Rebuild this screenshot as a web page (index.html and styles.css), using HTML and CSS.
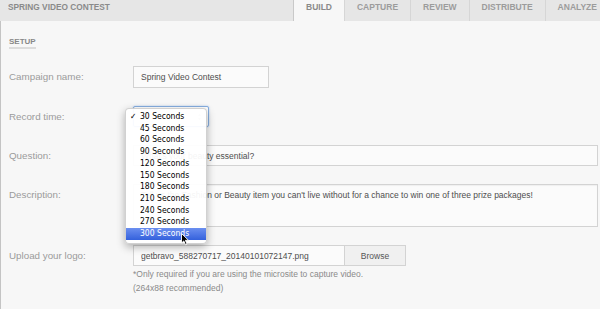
FILE: index.html
```html
<!DOCTYPE html>
<html lang="en">
<head>
  <meta charset="UTF-8">
  <title>Spring Video Contest - Build</title>
  <link rel="stylesheet" href="styles.css">
</head>
<body>
  <div class="topbar">
    <div class="title">SPRING VIDEO CONTEST</div>
    <ul class="tabs">
      <li class="active">BUILD</li>
      <li>CAPTURE</li>
      <li>REVIEW</li>
      <li>DISTRIBUTE</li>
      <li>ANALYZE</li>
    </ul>
  </div>

  <div class="page">
    <h2 class="section-title">SETUP</h2>

    <div class="row">
      <label>Campaign name:</label>
      <input class="text short" type="text" value="Spring Video Contest">
    </div>

    <div class="row">
      <label>Record time:</label>
      <div class="select">
        30 Seconds
        <svg class="updown" width="5" height="8" viewBox="0 0 5 8"><path d="M0.5 3 L2.5 0.5 L4.5 3 Z M0.5 5 L2.5 7.5 L4.5 5 Z" fill="#cfcfcf"/></svg>
        <ul class="menu">
          <li><span class="check">✓</span>30 Seconds</li>
          <li>45 Seconds</li>
          <li>60 Seconds</li>
          <li>90 Seconds</li>
          <li>120 Seconds</li>
          <li>150 Seconds</li>
          <li>180 Seconds</li>
          <li>210 Seconds</li>
          <li>240 Seconds</li>
          <li>270 Seconds</li>
          <li class="hover">300 Seconds</li>
        </ul>
        <svg class="cursor" width="9" height="13" viewBox="0 0 9 13"><path d="M0.5 0.5 L0.5 10 L2.8 7.9 L4.5 11.8 L6 11.1 L4.4 7.3 L7.5 7.3 Z" fill="#000" stroke="#fff" stroke-width="0.9"/></svg>
      </div>
    </div>

    <div class="row">
      <label>Question:</label>
      <input class="text wide" type="text" value="What's your beauty essential?">
    </div>

    <div class="row">
      <label>Description:</label>
      <textarea class="text wide area">Tell us the Fashion or Beauty item you can't live without for a chance to win one of three prize packages!</textarea>
    </div>

    <div class="row">
      <label>Upload your logo:</label>
      <div>
        <div class="file">
          <input class="text filename" type="text" value="getbravo_588270717_20140101072147.png">
          <button class="browse">Browse</button>
        </div>
        <p class="note">*Only required if you are using the microsite to capture video.<br>(264x88 recommended)</p>
      </div>
    </div>
  </div>
</body>
</html>
```

FILE: styles.css
```css
body {
  margin: 0;
  background-color: #f7f7f7;
  font-family: "Liberation Sans", Arial, sans-serif;
  overflow: hidden;
}
.topbar {
  display: flex;
  height: 21px;
  overflow: hidden;
}
.topbar .title {
  flex: 0 0 293px;
  box-sizing: border-box;
  padding-left: 8px;
  background-color: #e6e6e6;
  color: #8a8a8a;
  font-size: 8.3px;
  font-weight: bold;
  line-height: 14px;
}
.tabs {
  display: flex;
  flex-shrink: 0;
  margin: 0;
  padding: 0;
  list-style: none;
}
.tabs li {
  padding: 0 12px;
  background-color: #e6e6e6;
  border-left: 1px solid #d6d6d6;
  color: #9c9c9c;
  font-size: 8.5px;
  font-weight: bold;
  line-height: 14px;
}
.tabs li.active {
  background-color: #f7f7f7;
  border-left-color: #c9c9c9;
  color: #8a8a8a;
}
.page {
  height: 288px;
  box-sizing: border-box;
  padding: 16px 0 0 8px;
  border-left: 1px solid #c4c4c4;
}
.section-title {
  width: fit-content;
  margin: 0 0 17px;
  border-bottom: 2px solid #dcdcdc;
  color: #888;
  font-size: 8px;
  font-weight: bold;
  line-height: 10px;
}
.row {
  display: flex;
  align-items: flex-start;
  margin-bottom: 18px;
}
.row label {
  flex: 0 0 124px;
  color: #9b9b9b;
  font-size: 9.8px;
  line-height: 21px;
}
.text {
  height: 21px;
  box-sizing: border-box;
  margin: 0;
  padding: 0 7px;
  border: 1px solid #d3d3d3;
  border-radius: 0;
  background-color: #fbfbfb;
  color: #4e4e4e;
  font-family: "Liberation Sans", Arial, sans-serif;
  font-size: 8.5px;
  outline: none;
}
.short {
  width: 136px;
  height: 22px;
}
.wide {
  width: 465px;
}
.area {
  display: block;
  height: 43px;
  padding: 5px 7px;
  line-height: 10px;
  resize: none;
  overflow: hidden;
  box-shadow: inset 0 1px 1px rgba(0, 0, 0, 0.05);
}
.select {
  position: relative;
  width: 76px;
  height: 21px;
  box-sizing: border-box;
  padding-left: 6px;
  border: 1px solid #86aee0;
  border-radius: 2px;
  box-shadow: 0 0 2px #a9c6ec;
  background-color: #fff;
  color: #222;
  font-family: "DejaVu Sans Condensed", "DejaVu Sans", sans-serif;
  font-size: 8.5px;
  line-height: 19px;
}
.updown {
  position: absolute;
  right: 6px;
  top: 6px;
}
.menu {
  position: absolute;
  left: -9px;
  top: 1px;
  width: 82px;
  box-sizing: border-box;
  margin: 0;
  padding: 2px 0 3px;
  list-style: none;
  border: 1px solid rgba(0, 0, 0, 0.18);
  border-radius: 4px;
  background-color: rgba(255, 255, 255, 0.94);
  box-shadow: 0 3px 8px rgba(0, 0, 0, 0.3);
  z-index: 2;
}
.menu li {
  position: relative;
  padding-left: 14px;
  color: #000;
  font-size: 8.5px;
  line-height: 11.7px;
}
.menu .check {
  position: absolute;
  left: 4px;
}
.menu li.hover {
  background: linear-gradient(#6b8ff0, #3461dc);
  color: #fff;
}
.cursor {
  position: absolute;
  left: 47px;
  top: 126px;
  z-index: 3;
}
.file {
  display: flex;
}
.filename {
  width: 212px;
}
.browse {
  width: 61px;
  height: 21px;
  margin: 0;
  padding: 0;
  border: 1px solid #d3d3d3;
  border-left: none;
  background-color: #f0f0f0;
  color: #555;
  font-family: "Liberation Sans", Arial, sans-serif;
  font-size: 8.5px;
}
.note {
  margin: 1px 0 0;
  color: #8a8a8a;
  font-size: 8.5px;
  line-height: 14px;
}
```
